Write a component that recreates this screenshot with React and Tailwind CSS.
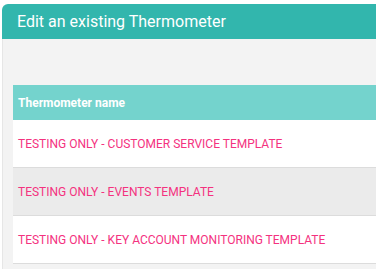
export default function App() {
  const rows = [
    'TESTING ONLY - CUSTOMER SERVICE TEMPLATE',
    'TESTING ONLY - EVENTS TEMPLATE',
    'TESTING ONLY - KEY ACCOUNT MONITORING TEMPLATE',
  ];

  return (
    <div className="h-[269px] w-[376px] overflow-hidden bg-white pt-[4px] pl-[2px] font-['Roboto',sans-serif]">
      <div className="flex h-[35px] items-center rounded-tl-[6px] bg-[#32b6ad] pl-[15px] text-[16px] text-white">
        Edit an existing Thermometer
      </div>
      <div className="h-[240px] border-l border-[#e6e6e6] bg-[#f3f3f3] pt-[46px] pl-[10px]">
        <div className="flex h-[35px] items-center bg-[#74d3cd] pl-[5px] text-[12px] font-bold text-white">
          Thermometer name
        </div>
        {rows.map((name, i) => (
          <div
            key={name}
            className={`flex h-[48px] items-center border-b border-[#dcdcdc] pl-[5px] text-[12px] text-[#f4327f] ${
              i % 2 === 1 ? 'bg-[#ebebeb]' : 'bg-white'
            }`}
          >
            {name}
          </div>
        ))}
      </div>
    </div>
  );
}
